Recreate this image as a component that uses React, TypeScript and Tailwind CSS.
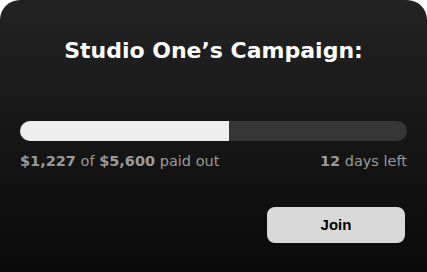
import React from 'react';

// fill width as drawn in the mockup, not the raised/goal ratio
const progress = 54;

export default function App() {
  return (
    <div className="w-[427px] h-[272px] bg-white">
      <div
        className="h-full rounded-t-[20px] bg-gradient-to-b from-[#232323] to-[#0a0a0a] px-5 flex flex-col"
        style={{ fontFamily: '"DejaVu Sans", sans-serif' }}
      >
        <h1 className="mt-[36px] text-center text-white text-[22px] font-bold leading-[30px]">
          Studio One’s Campaign:
        </h1>
        <div className="mt-[55px] h-[20px] rounded-full bg-[#363636] overflow-hidden">
          <div className="h-full bg-[#eeeeee]" style={{ width: `${progress}%` }} />
        </div>
        <div className="mt-[10px] flex justify-between text-[14.5px] leading-[20px] text-[#9a9a9a]">
          <span>
            <b className="font-bold">$1,227</b> of <b className="font-bold">$5,600</b> paid out
          </span>
          <span>
            <b className="font-bold">12</b> days left
          </span>
        </div>
        <div className="mt-[36px] flex justify-end pr-[2px]">
          <button
            className="w-[138px] h-[36px] rounded-[8px] bg-[#d9d9d9] text-black text-[15px] font-bold"
            style={{ fontFamily: '"Liberation Sans", Arial, sans-serif' }}
          >
            Join
          </button>
        </div>
      </div>
    </div>
  );
}
